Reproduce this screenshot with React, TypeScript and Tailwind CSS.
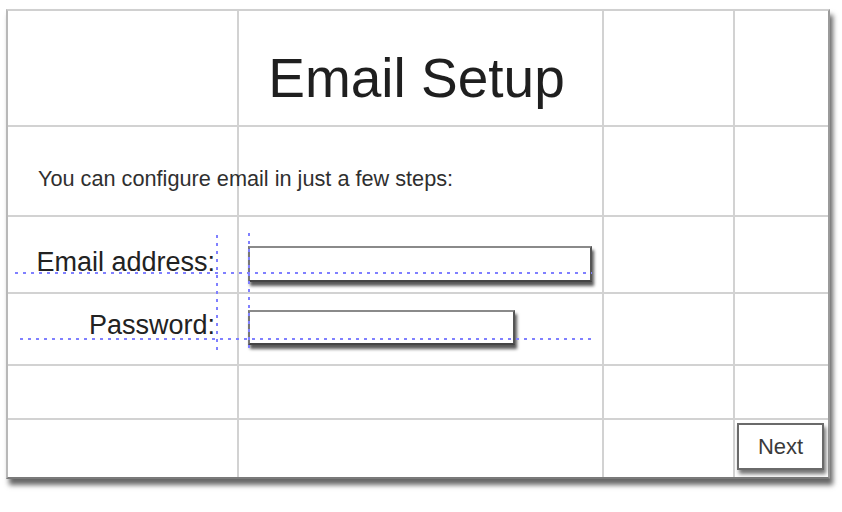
const COLS = 4
const ROWS = 6

function Guide({ className }: { className: string }) {
  return <div className={`absolute pointer-events-none ${className}`} />
}

export default function App() {
  const cells = Array.from({ length: COLS * ROWS }, (_, i) => i)

  return (
    <div className="w-[842px] h-[512px] bg-white pl-[6px] pt-[9px] font-['Liberation_Sans',Arial,sans-serif]">
      <div className="relative w-[824px] h-[470px] border-2 border-t-[#d0d0d0] border-l-[#b8b8b8] border-r-[#9a9a9a] border-b-[#7a7a7a] bg-white shadow-[3px_6px_5px_rgba(0,0,0,0.6)]">
        <div className="grid grid-cols-[231px_365px_131px_93px] grid-rows-[116px_90px_77px_72px_54px_57px]">
          {/* Wireframe grid */}
          {cells.map((i) => {
            const col = i % COLS
            const row = Math.floor(i / COLS)
            return (
              <div
                key={i}
                style={{ gridColumn: col + 1, gridRow: row + 1 }}
                className={`${col < COLS - 1 ? "border-r-2" : ""} ${
                  row < ROWS - 1 ? "border-b-2" : ""
                } border-[#d2d2d2]`}
              />
            )
          })}

          {/* Title */}
          <div className="col-start-2 row-start-1 pt-[40px] pr-[10px] text-center">
            <h1 className="text-[55px] leading-none text-[#1f1f1f]">Email Setup</h1>
          </div>

          {/* Intro */}
          <div className="col-start-1 col-span-3 row-start-2 pt-[41px] pl-[30px]">
            <p className="text-[21.7px] leading-none text-[#2f2f2f]">
              You can configure email in just a few steps:
            </p>
          </div>

          {/* Email */}
          <div className="col-start-1 row-start-3 pt-[32px] pr-[24px] text-right">
            <label className="text-[27px] leading-none text-[#222]">Email address:</label>
          </div>
          <div className="col-start-2 row-start-3 pt-[29px] pl-[9px]">
            <div className="w-[344px] h-[36px] border-2 border-t-[#8a8a8a] border-l-[#777] border-r-[#555] border-b-[#444] bg-white shadow-[2px_4px_3px_rgba(0,0,0,0.65)]" />
          </div>

          {/* Password */}
          <div className="col-start-1 row-start-4 pt-[18px] pr-[24px] text-right">
            <label className="text-[27px] leading-none text-[#222]">Password:</label>
          </div>
          <div className="col-start-2 row-start-4 pt-[16px] pl-[9px]">
            <div className="w-[267px] h-[35px] border-2 border-t-[#8a8a8a] border-l-[#777] border-r-[#555] border-b-[#444] bg-white shadow-[2px_4px_3px_rgba(0,0,0,0.65)]" />
          </div>

          {/* Next */}
          <div className="col-start-4 row-start-6 pt-[3px] pl-[2px]">
            <button className="w-[87px] h-[47px] flex items-center justify-center border-2 border-[#6a6a6a] bg-white text-[22px] text-[#3a3a3a] shadow-[2px_4px_4px_rgba(0,0,0,0.55)]">
              Next
            </button>
          </div>
        </div>

        {/* Alignment guides */}
        <Guide className="left-[7px] top-[261px] w-[577px] h-[2px] bg-[repeating-linear-gradient(90deg,#8080ff_0_3px,transparent_3px_8px)]" />
        <Guide className="left-[12px] top-[327px] w-[574px] h-[2px] bg-[repeating-linear-gradient(90deg,#8080ff_0_3px,transparent_3px_8px)]" />
        <Guide className="left-[208px] top-[224px] w-[2px] h-[117px] bg-[repeating-linear-gradient(180deg,#8080ff_0_3px,transparent_3px_8px)]" />
        <Guide className="left-[240px] top-[222px] w-[2px] h-[117px] bg-[repeating-linear-gradient(180deg,#8080ff_0_3px,transparent_3px_8px)]" />
      </div>
    </div>
  )
}
